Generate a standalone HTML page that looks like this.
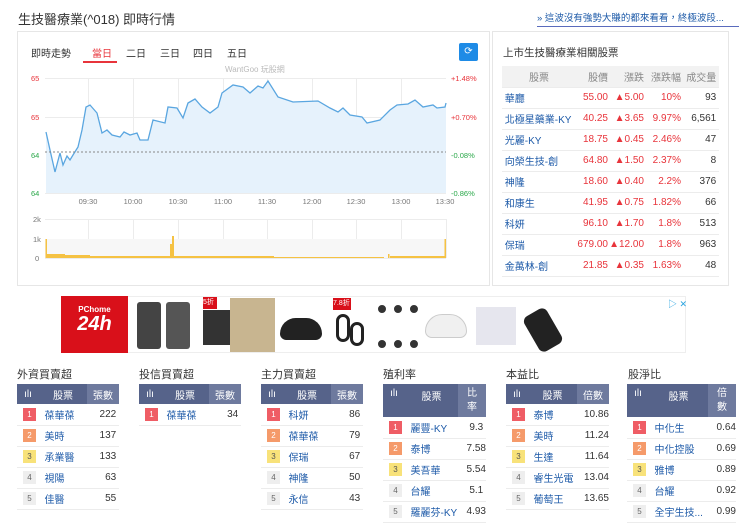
<!DOCTYPE html>
<html><head><meta charset="utf-8">
<style>
*{margin:0;padding:0;box-sizing:border-box}
body{width:740px;height:527px;overflow:hidden;background:#fff;font-family:"Liberation Sans","Noto Sans CJK TC",sans-serif;color:#333;position:relative;font-size:11px}
.a{position:absolute}
.lnk{color:#1d5aa8}
.red{color:#e8343b}
table{border-collapse:collapse;table-layout:fixed}
.rt td{height:21px;border-bottom:1px solid #ececec;font-size:10px;white-space:nowrap;overflow:hidden}
.bt{position:absolute;top:384px;border-collapse:collapse;font-size:10px}
.bt th{background:#56638a;color:#fff;font-weight:normal;height:20px;font-size:10px}
.bt th.l{background:#6e7a9e}
.bt td{height:21px;border-bottom:1px solid #ececec;font-size:10px;white-space:nowrap}
.rk{display:inline-block;width:13px;height:13px;line-height:13px;text-align:center;font-size:8px;color:#fff;margin-left:6px}
.r1{background:#ef5d65}.r2{background:#f59a6a}.r3{background:#f8e27a;color:#555}.r4{background:#eee;color:#666}
.st{position:absolute;top:366px;font-size:11px;color:#333}
</style></head><body>
<div class="a" style="left:18px;top:9px;font-size:13px;color:#333">生技醫療業(^018) 即時行情</div>
<div class="a" style="left:537px;top:10px;font-size:9.5px;color:#1d5aa8;border-bottom:1px solid #5a6bbd;width:202px;padding-bottom:2px;white-space:nowrap;overflow:hidden">» 這波沒有強勢大賺的都來看看，終極波段...</div>

<div class="a" style="left:17px;top:31px;width:473px;height:255px;border:1px solid #e6e6e6"></div>
<div class="a" style="left:31px;top:45px;font-size:10px">即時走勢</div>
<div class="a" style="left:92px;top:45px;font-size:10px;color:#e8343b">當日</div>
<div class="a" style="left:83px;top:61px;width:34px;height:2px;background:#e8343b"></div>
<div class="a" style="left:126px;top:45px;font-size:10px">二日</div>
<div class="a" style="left:160px;top:45px;font-size:10px">三日</div>
<div class="a" style="left:193px;top:45px;font-size:10px">四日</div>
<div class="a" style="left:227px;top:45px;font-size:10px">五日</div>
<div class="a" style="left:459px;top:43px;width:19px;height:18px;background:#1e8be6;border-radius:2px;color:#fff;font-size:10px;text-align:center;line-height:18px">⟳</div>
<div class="a" style="left:225px;top:64px;font-size:8px;color:#bbb">WantGoo 玩股網</div>

<svg class="a" style="left:0;top:0" width="490" height="280">
<g stroke="#ececec" stroke-width="1">
<line x1="45" y1="78.5" x2="446" y2="78.5"/><line x1="45" y1="117.5" x2="446" y2="117.5"/><line x1="45" y1="193.5" x2="446" y2="193.5"/>
<line x1="88.5" y1="78" x2="88.5" y2="193"/><line x1="133.5" y1="78" x2="133.5" y2="193"/><line x1="178.5" y1="78" x2="178.5" y2="193"/><line x1="223.5" y1="78" x2="223.5" y2="193"/><line x1="267.5" y1="78" x2="267.5" y2="193"/><line x1="312.5" y1="78" x2="312.5" y2="193"/><line x1="356.5" y1="78" x2="356.5" y2="193"/><line x1="401.5" y1="78" x2="401.5" y2="193"/>
<line x1="45" y1="219.5" x2="446" y2="219.5"/><line x1="45" y1="258.5" x2="446" y2="258.5"/>
<line x1="88.5" y1="219" x2="88.5" y2="258"/><line x1="133.5" y1="219" x2="133.5" y2="258"/><line x1="178.5" y1="219" x2="178.5" y2="258"/><line x1="223.5" y1="219" x2="223.5" y2="258"/><line x1="267.5" y1="219" x2="267.5" y2="258"/><line x1="312.5" y1="219" x2="312.5" y2="258"/><line x1="356.5" y1="219" x2="356.5" y2="258"/><line x1="401.5" y1="219" x2="401.5" y2="258"/><line x1="446.5" y1="219" x2="446.5" y2="258"/>
</g>
<rect x="45" y="239" width="401" height="19" fill="#f7f7f7"/>
<path d="M46,132 L50,150 L55,172 L60,153 L63,165 L67,156 L70,160 L73,155 L78,147 L82,130 L86,107 L90,105 L97,113 L102,133 L107,130 L112,135 L120,137 L124,132 L130,135 L137,133 L140,140 L148,140 L153,120 L165,123 L168,107 L177,108 L183,118 L188,103 L195,99 L202,107 L210,113 L218,107 L222,93 L233,85 L243,87 L250,93 L258,86 L263,88 L268,81 L278,97 L293,102 L318,101 L330,108 L338,112 L343,108 L350,115 L362,117 L367,123 L380,120 L390,110 L397,105 L408,104 L415,100 L423,107 L433,105 L437,108 L445,107 L446,103 L446,193 L46,193 Z" fill="#e6f2fc"/>
<path d="M46,132 L50,150 L55,172 L60,153 L63,165 L67,156 L70,160 L73,155 L78,147 L82,130 L86,107 L90,105 L97,113 L102,133 L107,130 L112,135 L120,137 L124,132 L130,135 L137,133 L140,140 L148,140 L153,120 L165,123 L168,107 L177,108 L183,118 L188,103 L195,99 L202,107 L210,113 L218,107 L222,93 L233,85 L243,87 L250,93 L258,86 L263,88 L268,81 L278,97 L293,102 L318,101 L330,108 L338,112 L343,108 L350,115 L362,117 L367,123 L380,120 L390,110 L397,105 L408,104 L415,100 L423,107 L433,105 L437,108 L445,107 L446,103" fill="none" stroke="#5aa6e0" stroke-width="1.3"/>
<line x1="45" y1="152" x2="446" y2="152" stroke="#888" stroke-dasharray="2,2"/>
<g fill="#f5c243">
<rect x="45.5" y="239" width="1.5" height="19"/><rect x="47" y="254" width="18" height="4"/><rect x="65" y="255" width="25" height="3"/><rect x="90" y="256" width="80" height="2"/>
<rect x="170" y="244" width="2" height="14"/><rect x="172" y="236" width="2" height="22"/><rect x="174" y="256" width="100" height="2"/><rect x="274" y="257" width="110" height="1"/><rect x="388" y="254" width="1.5" height="4"/><rect x="390" y="256" width="55" height="2"/><rect x="444.5" y="239" width="1.5" height="19"/>
</g>
<g font-size="7.5" font-family="Liberation Sans">
<text x="31" y="81" fill="#e8343b">65</text><text x="31" y="120" fill="#e8343b">65</text><text x="31" y="158" fill="#2aa84a">64</text><text x="31" y="196" fill="#2aa84a">64</text>
<text x="451" y="81" fill="#e8343b">+1.48%</text><text x="451" y="120" fill="#e8343b">+0.70%</text><text x="451" y="158" fill="#2aa84a">-0.08%</text><text x="451" y="196" fill="#2aa84a">-0.86%</text>
<g fill="#777" text-anchor="middle"><text x="88" y="204">09:30</text><text x="133" y="204">10:00</text><text x="178" y="204">10:30</text><text x="223" y="204">11:00</text><text x="267" y="204">11:30</text><text x="312" y="204">12:00</text><text x="356" y="204">12:30</text><text x="401" y="204">13:00</text><text x="445" y="204">13:30</text></g>
<g fill="#777"><text x="33" y="222">2k</text><text x="33" y="242">1k</text><text x="35" y="261">0</text></g>
</g>
</svg>

<div class="a" style="left:492px;top:31px;width:237px;height:255px;border:1px solid #e6e6e6"></div>
<div class="a" style="left:503px;top:45px;font-size:10.5px">上市生技醫療業相關股票</div>
<table class="a rt" style="left:502px;top:66px;width:217px">
<colgroup><col style="width:74px"><col style="width:32px"><col style="width:36px"><col style="width:37px"><col></colgroup>
<tr style="background:#f2f2f2;color:#888"><td style="text-align:center">股票</td><td style="text-align:right">股價</td><td style="text-align:right">漲跌</td><td style="text-align:right">漲跌幅</td><td style="text-align:right">成交量&nbsp;</td></tr>
<tr><td class="lnk">&nbsp;華廳</td><td class="red" style="text-align:right">55.00</td><td class="red" style="text-align:right">▲5.00</td><td class="red" style="text-align:right">10%</td><td style="text-align:right">93&nbsp;</td></tr>
<tr><td class="lnk">&nbsp;北極星藥業-KY</td><td class="red" style="text-align:right">40.25</td><td class="red" style="text-align:right">▲3.65</td><td class="red" style="text-align:right">9.97%</td><td style="text-align:right">6,561&nbsp;</td></tr>
<tr><td class="lnk">&nbsp;光麗-KY</td><td class="red" style="text-align:right">18.75</td><td class="red" style="text-align:right">▲0.45</td><td class="red" style="text-align:right">2.46%</td><td style="text-align:right">47&nbsp;</td></tr>
<tr><td class="lnk">&nbsp;向榮生技-創</td><td class="red" style="text-align:right">64.80</td><td class="red" style="text-align:right">▲1.50</td><td class="red" style="text-align:right">2.37%</td><td style="text-align:right">8&nbsp;</td></tr>
<tr><td class="lnk">&nbsp;神隆</td><td class="red" style="text-align:right">18.60</td><td class="red" style="text-align:right">▲0.40</td><td class="red" style="text-align:right">2.2%</td><td style="text-align:right">376&nbsp;</td></tr>
<tr><td class="lnk">&nbsp;和康生</td><td class="red" style="text-align:right">41.95</td><td class="red" style="text-align:right">▲0.75</td><td class="red" style="text-align:right">1.82%</td><td style="text-align:right">66&nbsp;</td></tr>
<tr><td class="lnk">&nbsp;科妍</td><td class="red" style="text-align:right">96.10</td><td class="red" style="text-align:right">▲1.70</td><td class="red" style="text-align:right">1.8%</td><td style="text-align:right">513&nbsp;</td></tr>
<tr><td class="lnk">&nbsp;保瑞</td><td class="red" style="text-align:right">679.00</td><td class="red" style="text-align:right">▲12.00</td><td class="red" style="text-align:right">1.8%</td><td style="text-align:right">963&nbsp;</td></tr>
<tr><td class="lnk">&nbsp;金萬林-創</td><td class="red" style="text-align:right">21.85</td><td class="red" style="text-align:right">▲0.35</td><td class="red" style="text-align:right">1.63%</td><td style="text-align:right">48&nbsp;</td></tr>
</table>

<div class="a" style="left:61px;top:296px;width:625px;height:57px;border:1px solid #eee;background:#fff"></div>
<div class="a" style="left:61px;top:296px;width:67px;height:57px;background:#d9101a;color:#fff;text-align:center"><div style="font-size:8px;font-weight:bold;margin-top:9px">PChome</div><div style="font-size:20px;font-weight:bold;font-style:italic;line-height:20px">24h</div></div>
<div class="a" style="left:137px;top:302px;width:24px;height:47px;background:#444;border-radius:3px"></div>
<div class="a" style="left:166px;top:302px;width:24px;height:47px;background:#555;border-radius:3px"></div>
<div class="a" style="left:203px;top:310px;width:50px;height:35px;background:#333"></div>
<div class="a" style="left:203px;top:297px;width:14px;height:12px;background:#d9101a;color:#fff;font-size:7px">5折</div>
<div class="a" style="left:230px;top:298px;width:45px;height:54px;background:#c8b590"></div>
<div class="a" style="left:280px;top:318px;width:42px;height:22px;background:#222;border-radius:20px 20px 8px 8px"></div>
<div class="a" style="left:333px;top:298px;width:18px;height:12px;background:#d9101a;color:#fff;font-size:7px">7.8折</div>
<div class="a" style="left:336px;top:314px;width:14px;height:28px;border:3px solid #222;border-radius:8px"></div>
<div class="a" style="left:350px;top:322px;width:14px;height:24px;border:3px solid #222;border-radius:8px"></div>
<div class="a" style="left:378px;top:305px;width:40px;height:43px;border-top:8px dotted #333;border-bottom:8px dotted #333"></div>
<div class="a" style="left:425px;top:314px;width:42px;height:24px;background:#f0f0f0;border-radius:20px 20px 8px 8px;border:1px solid #ccc"></div>
<div class="a" style="left:476px;top:307px;width:40px;height:38px;background:#e6e6ee"></div>
<div class="a" style="left:530px;top:310px;width:26px;height:40px;background:#222;border-radius:6px;transform:rotate(-30deg)"></div>
<div class="a" style="left:668px;top:297px;font-size:9px;color:#2aa4e0">▷ ✕</div>

<div class="st" style="left:17px">外資買賣超</div>
<table class="bt" style="left:17px;width:102px"><tr><th style="width:22px">ılı</th><th>股票</th><th class="l" style="width:32px">張數</th></tr>
<tr><td><span class="rk r1">1</span></td><td class="lnk">&nbsp;&nbsp;葆華葆</td><td style="text-align:right">222&nbsp;</td></tr>
<tr><td><span class="rk r2">2</span></td><td class="lnk">&nbsp;&nbsp;美時</td><td style="text-align:right">137&nbsp;</td></tr>
<tr><td><span class="rk r3">3</span></td><td class="lnk">&nbsp;&nbsp;承業醫</td><td style="text-align:right">133&nbsp;</td></tr>
<tr><td><span class="rk r4">4</span></td><td class="lnk">&nbsp;&nbsp;視陽</td><td style="text-align:right">63&nbsp;</td></tr>
<tr><td><span class="rk r4">5</span></td><td class="lnk">&nbsp;&nbsp;佳醫</td><td style="text-align:right">55&nbsp;</td></tr></table>

<div class="st" style="left:139px">投信買賣超</div>
<table class="bt" style="left:139px;width:102px"><tr><th style="width:22px">ılı</th><th>股票</th><th class="l" style="width:32px">張數</th></tr>
<tr><td><span class="rk r1">1</span></td><td class="lnk">&nbsp;&nbsp;葆華葆</td><td style="text-align:right">34&nbsp;</td></tr></table>

<div class="st" style="left:261px">主力買賣超</div>
<table class="bt" style="left:261px;width:102px"><tr><th style="width:22px">ılı</th><th>股票</th><th class="l" style="width:32px">張數</th></tr>
<tr><td><span class="rk r1">1</span></td><td class="lnk">&nbsp;&nbsp;科妍</td><td style="text-align:right">86&nbsp;</td></tr>
<tr><td><span class="rk r2">2</span></td><td class="lnk">&nbsp;&nbsp;葆華葆</td><td style="text-align:right">79&nbsp;</td></tr>
<tr><td><span class="rk r3">3</span></td><td class="lnk">&nbsp;&nbsp;保瑞</td><td style="text-align:right">67&nbsp;</td></tr>
<tr><td><span class="rk r4">4</span></td><td class="lnk">&nbsp;&nbsp;神隆</td><td style="text-align:right">50&nbsp;</td></tr>
<tr><td><span class="rk r4">5</span></td><td class="lnk">&nbsp;&nbsp;永信</td><td style="text-align:right">43&nbsp;</td></tr></table>

<div class="st" style="left:383px">殖利率</div>
<table class="bt" style="left:383px;width:103px"><tr><th style="width:22px;height:33px;vertical-align:top;padding-top:4px">ılı</th><th style="vertical-align:top;padding-top:4px">股票</th><th class="l" style="width:28px;line-height:14px">比<br>率</th></tr>
<tr><td><span class="rk r1">1</span></td><td class="lnk">&nbsp;&nbsp;麗豐-KY</td><td style="text-align:right">9.3&nbsp;</td></tr>
<tr><td><span class="rk r2">2</span></td><td class="lnk">&nbsp;&nbsp;泰博</td><td style="text-align:right">7.58</td></tr>
<tr><td><span class="rk r3">3</span></td><td class="lnk">&nbsp;&nbsp;美吾華</td><td style="text-align:right">5.54</td></tr>
<tr><td><span class="rk r4">4</span></td><td class="lnk">&nbsp;&nbsp;台耀</td><td style="text-align:right">5.1&nbsp;</td></tr>
<tr><td><span class="rk r4">5</span></td><td class="lnk">&nbsp;&nbsp;羅麗芬-KY</td><td style="text-align:right">4.93</td></tr></table>

<div class="st" style="left:506px">本益比</div>
<table class="bt" style="left:506px;width:103px"><tr><th style="width:22px">ılı</th><th>股票</th><th class="l" style="width:32px">倍數</th></tr>
<tr><td><span class="rk r1">1</span></td><td class="lnk">&nbsp;&nbsp;泰博</td><td style="text-align:right">10.86</td></tr>
<tr><td><span class="rk r2">2</span></td><td class="lnk">&nbsp;&nbsp;美時</td><td style="text-align:right">11.24</td></tr>
<tr><td><span class="rk r3">3</span></td><td class="lnk">&nbsp;&nbsp;生達</td><td style="text-align:right">11.64</td></tr>
<tr><td><span class="rk r4">4</span></td><td class="lnk">&nbsp;&nbsp;睿生光電</td><td style="text-align:right">13.04</td></tr>
<tr><td><span class="rk r4">5</span></td><td class="lnk">&nbsp;&nbsp;葡萄王</td><td style="text-align:right">13.65</td></tr></table>

<div class="st" style="left:628px">股淨比</div>
<table class="bt" style="left:627px;width:109px"><tr><th style="width:22px;height:33px;vertical-align:top;padding-top:4px">ılı</th><th style="vertical-align:top;padding-top:4px">股票</th><th class="l" style="width:28px;line-height:14px">倍<br>數</th></tr>
<tr><td><span class="rk r1">1</span></td><td class="lnk">&nbsp;&nbsp;中化生</td><td style="text-align:right">0.64</td></tr>
<tr><td><span class="rk r2">2</span></td><td class="lnk">&nbsp;&nbsp;中化控股</td><td style="text-align:right">0.69</td></tr>
<tr><td><span class="rk r3">3</span></td><td class="lnk">&nbsp;&nbsp;雅博</td><td style="text-align:right">0.89</td></tr>
<tr><td><span class="rk r4">4</span></td><td class="lnk">&nbsp;&nbsp;台耀</td><td style="text-align:right">0.92</td></tr>
<tr><td><span class="rk r4">5</span></td><td class="lnk">&nbsp;&nbsp;全宇生技...</td><td style="text-align:right">0.99</td></tr></table>
</body></html>
